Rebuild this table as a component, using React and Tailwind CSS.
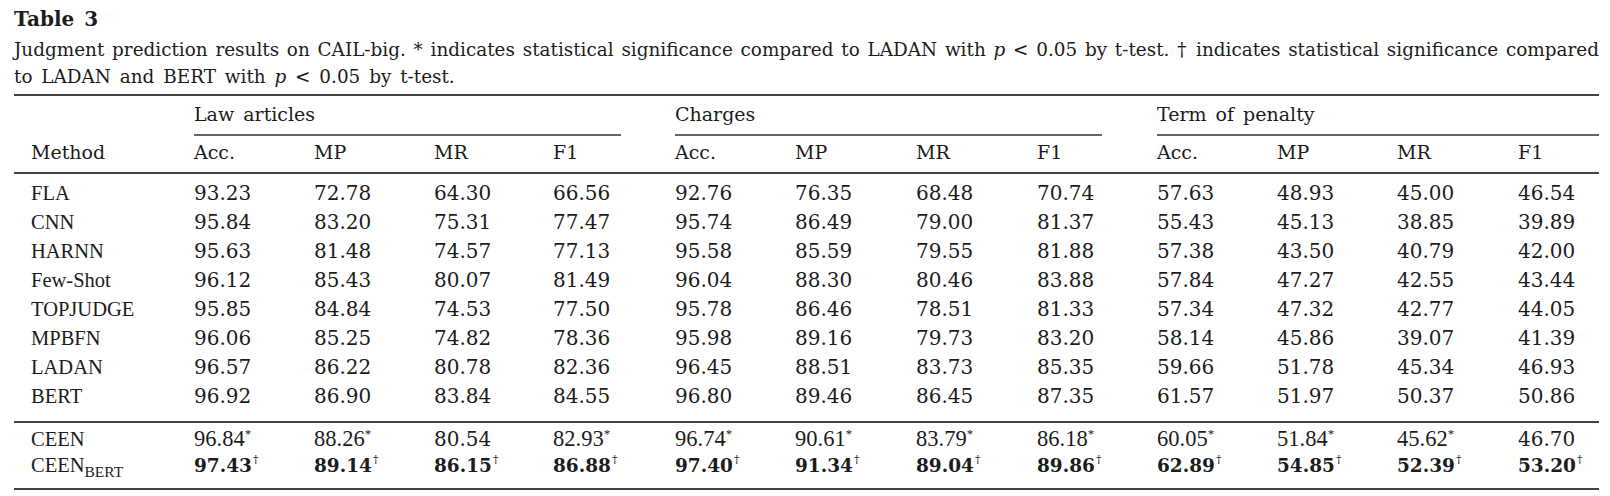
import React from "react";

const COLS =
  "grid grid-cols-[180px_120px_120px_119px_122px_120px_121px_121px_120px_120px_120px_121px_81px]";

const rows = [
  ["FLA", "93.23", "72.78", "64.30", "66.56", "92.76", "76.35", "68.48", "70.74", "57.63", "48.93", "45.00", "46.54"],
  ["CNN", "95.84", "83.20", "75.31", "77.47", "95.74", "86.49", "79.00", "81.37", "55.43", "45.13", "38.85", "39.89"],
  ["HARNN", "95.63", "81.48", "74.57", "77.13", "95.58", "85.59", "79.55", "81.88", "57.38", "43.50", "40.79", "42.00"],
  ["Few-Shot", "96.12", "85.43", "80.07", "81.49", "96.04", "88.30", "80.46", "83.88", "57.84", "47.27", "42.55", "43.44"],
  ["TOPJUDGE", "95.85", "84.84", "74.53", "77.50", "95.78", "86.46", "78.51", "81.33", "57.34", "47.32", "42.77", "44.05"],
  ["MPBFN", "96.06", "85.25", "74.82", "78.36", "95.98", "89.16", "79.73", "83.20", "58.14", "45.86", "39.07", "41.39"],
  ["LADAN", "96.57", "86.22", "80.78", "82.36", "96.45", "88.51", "83.73", "85.35", "59.66", "51.78", "45.34", "46.93"],
  ["BERT", "96.92", "86.90", "83.84", "84.55", "96.80", "89.46", "86.45", "87.35", "61.57", "51.97", "50.37", "50.86"],
];

// CEEN row: trailing "*" means significant vs LADAN
const ceen = ["96.84*", "88.26*", "80.54", "82.93*", "96.74*", "90.61*", "83.79*", "86.18*", "60.05*", "51.84*", "45.62*", "46.70"];
const ceenBert = ["97.43", "89.14", "86.15", "86.88", "97.40", "91.34", "89.04", "89.86", "62.89", "54.85", "52.39", "53.20"];

const metrics = ["Acc.", "MP", "MR", "F1"];

function Rule({ className = "" }) {
  return <div className={`h-[2px] bg-[#444] ${className}`} />;
}

function Group({ label, ruleClass }) {
  return (
    <div className="col-span-4 flex flex-col pt-[4px]">
      <span className="leading-[29px] [word-spacing:3px]">{label}</span>
      <div className={`mt-[5px] h-[2px] bg-[#666] ${ruleClass}`} />
    </div>
  );
}

function Method({ children }) {
  return (
    <div className="pl-[17px] font-['Liberation_Serif',serif] text-[20.5px] leading-[29px]">
      {children}
    </div>
  );
}

function Starred({ value }) {
  if (!value.endsWith("*")) {
    return <div className="text-[20px] leading-[27px]">{value}</div>;
  }
  return (
    <div className="leading-[27px]">
      <span className="font-['Liberation_Serif',serif] text-[22.5px]">
        {value.slice(0, -1)}
        <sup className="text-[13px] top-[-8px]">*</sup>
      </span>
    </div>
  );
}

export default function App() {
  return (
    <div className="w-[1610px] bg-white pl-[14px] pt-[6px] font-['DejaVu_Serif',serif] text-[19px] text-[#1c1c1c]">
      <div className="w-[1585px]">
        {/* ================= CAPTION ================= */}
        <div className="text-[20px] font-bold leading-[27px] [word-spacing:3px]">Table 3</div>
        <div className="mt-[3px] text-[18.4px] leading-[27px]">
          <div className="whitespace-nowrap [text-align-last:justify]">
            Judgment prediction results on CAIL-big. * indicates statistical significance compared to LADAN with{" "}
            <i>p</i> &lt; 0.05 by t-test. † indicates statistical significance compared
          </div>
          <div className="[word-spacing:3px]">
            to LADAN and BERT with <i>p</i> &lt; 0.05 by t-test.
          </div>
        </div>

        {/* ================= HEADER ================= */}
        <Rule className="mt-[4px]" />
        <div className={`${COLS} h-[38px]`}>
          <div />
          <Group label="Law articles" ruleClass="mr-[54px]" />
          <Group label="Charges" ruleClass="mr-[55px]" />
          <Group label="Term of penalty" ruleClass="" />
        </div>
        <div className={`${COLS} h-[38px] items-baseline pt-[4px]`}>
          <div className="pl-[17px] leading-[29px]">Method</div>
          {[0, 1, 2].flatMap((g) =>
            metrics.map((m) => (
              <div key={`${g}-${m}`} className="leading-[29px]">
                {m}
              </div>
            ))
          )}
        </div>
        <Rule />

        {/* ================= BASELINES ================= */}
        <div className="pt-[5px] pb-[10px]">
          {rows.map(([name, ...vals]) => (
            <div key={name} className={`${COLS} h-[29px] items-baseline`}>
              <Method>{name}</Method>
              {vals.map((v, i) => (
                <div key={i} className="text-[20px] leading-[29px]">
                  {v}
                </div>
              ))}
            </div>
          ))}
        </div>
        <Rule />

        {/* ================= OURS ================= */}
        <div className="pt-[2px] pb-[9px]">
          <div className={`${COLS} h-[27px] items-baseline`}>
            <div className="pl-[17px] font-['Liberation_Serif',serif] text-[20.5px] leading-[27px]">CEEN</div>
            {ceen.map((v, i) => (
              <Starred key={i} value={v} />
            ))}
          </div>
          <div className={`${COLS} h-[27px] items-baseline`}>
            <div className="pl-[17px] font-['Liberation_Serif',serif] text-[20.5px] leading-[27px]">
              CEEN<sub className="text-[15.5px] bottom-[-5px]">BERT</sub>
            </div>
            {ceenBert.map((v, i) => (
              <div key={i} className="leading-[27px]">
                <span className="font-bold text-[18.5px]">{v}</span>
                <sup className="text-[11px] top-[-9px] ml-[1px]">†</sup>
              </div>
            ))}
          </div>
        </div>
        <Rule />
        <div className="h-[4px]" />
      </div>
    </div>
  );
}
